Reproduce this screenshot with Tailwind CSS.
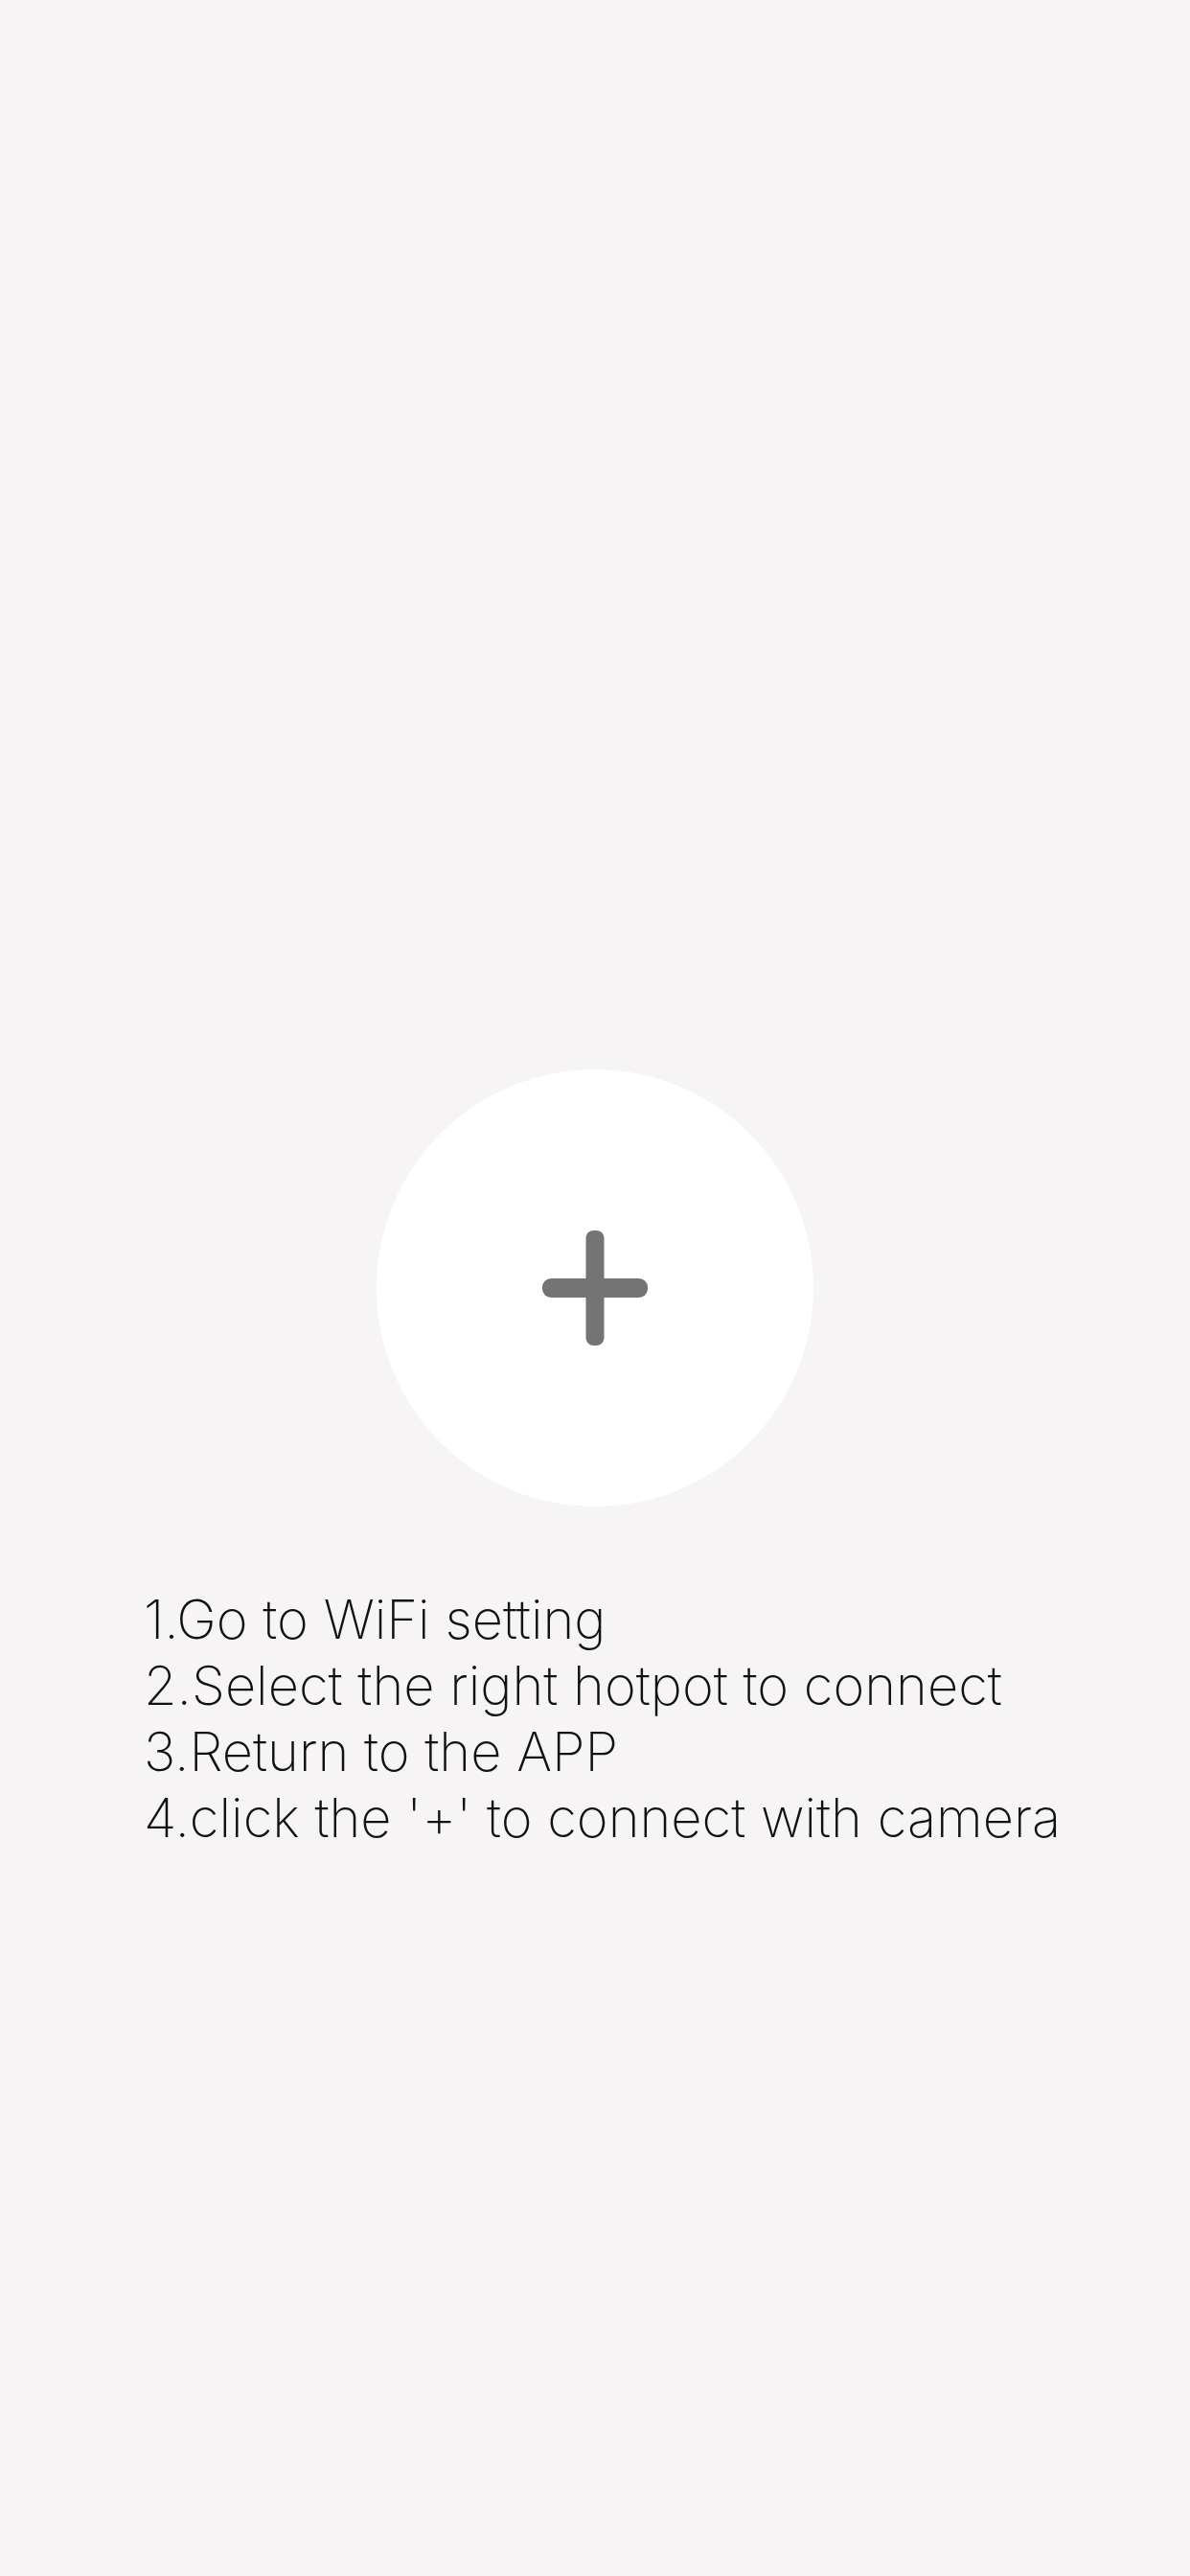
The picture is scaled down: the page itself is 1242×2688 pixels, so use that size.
<!DOCTYPE html>
<html lang="en">
<head>
<meta charset="utf-8">
<meta name="viewport" content="width=device-width, initial-scale=1">
<title>Connect camera</title>
<script src="https://cdn.jsdelivr.net/npm/@tailwindcss/browser@4"></script>
</head>
<body class="bg-[#f6f4f5]">
<main class="grid min-h-screen grid-rows-[1fr_auto_1fr] justify-items-center">
  <button type="button" aria-label="Connect with camera" class="row-start-2 flex size-[456px] items-center justify-center rounded-full bg-white">
    <svg class="h-[120px] w-[110px]" viewBox="0 0 110 120" fill="#747474" aria-hidden="true">
      <rect x="45.5" y="0" width="19" height="120" rx="8"/>
      <rect x="0" y="50" width="110" height="20" rx="9"/>
    </svg>
  </button>
  <ol class="row-start-3 w-full pt-[84px] pr-[100px] pl-[150px] font-['Inter',sans-serif] text-[56px] leading-[69px] font-extralight text-[#111]">
    <li>1.Go to WiFi setting</li>
    <li>2.Select the right hotpot to connect</li>
    <li>3.Return to the APP</li>
    <li>4.click the '+' to connect with camera</li>
  </ol>
</main>
</body>
</html>
